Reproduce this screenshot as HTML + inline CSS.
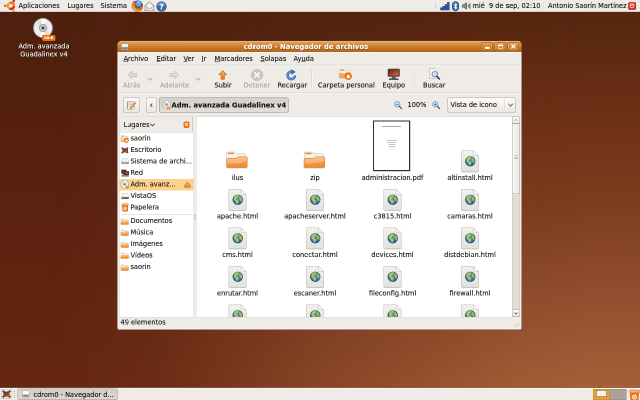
<!DOCTYPE html>
<html><head><meta charset="utf-8"><title>cdrom0 - Navegador de archivos</title>
<style>
html,body{margin:0;padding:0;width:640px;height:400px;overflow:hidden;background:#5a2410}
#s{position:absolute;left:0;top:0;width:1280px;height:800px;transform:scale(.5);transform-origin:0 0;will-change:transform;
 font-family:"DejaVu Sans","Liberation Sans",sans-serif;font-size:13.2px;color:#111;-webkit-text-stroke:.22px;overflow:hidden;
 background:linear-gradient(to bottom,#4e200d 3%,#5c2310 55%,#652712 97%);}
#bgr{left:0;top:0;width:1280px;height:800px;background:linear-gradient(to bottom,#56260f 3%,#6c3017 27%,#7d3c1e 50%,#925030 75%,#a66038 97%);
 -webkit-mask-image:linear-gradient(to right,transparent 8%,rgba(0,0,0,.1) 24%,rgba(0,0,0,.55) 50%,rgba(0,0,0,.92) 80%,#000 92%);mask-image:linear-gradient(to right,transparent 8%,rgba(0,0,0,.1) 24%,rgba(0,0,0,.55) 50%,rgba(0,0,0,.92) 80%,#000 92%)}
#s *{position:absolute;box-sizing:border-box;white-space:nowrap}
#s svg *{position:static}
.t{line-height:16px;height:16px}
.c{text-align:center}
.panel{left:0;width:1280px;height:24px;background:#efebe7}
#tp{top:0;border-bottom:1px solid #b9b3aa;height:24px}
#bp{top:776px;height:24px;border-top:1px solid #fff;box-shadow:0 -1px 0 #8a6a55}
#win{left:234px;top:81px;width:810px;height:579px;background:#efebe7;box-shadow:inset -1.500px -1.500px 0 #fbfaf9,inset 1.500px 0 0 #fbfaf9;border-radius:9px 9px 4px 4px;border:1px solid #5a3a22}
#tb{left:0;top:0;width:808px;height:22px;border-radius:8px 8px 0 0;
 background:linear-gradient(to bottom,#f3c690 0,#e3a055 2px,#d38a3c 8px,#c27426 15px,#b96b20 20px,#a95e18 22px)}
#tb .ttl{left:0;width:754px;top:3px;font-weight:bold;color:#fff;text-shadow:1px 1px 1px #6a3a0e;text-align:center;font-size:13.6px}
.wb{top:3px;width:23px;height:17px;border:1px solid #8d4f17;border-radius:3px;background:linear-gradient(to bottom,#dc9950,#c57a2c);box-shadow:inset 0 0 0 1px rgba(255,220,170,.35)}
.hl{background:#fff;height:1px}
.sep{background:#cfc9c0;height:1px}
.menu{top:110px}
#s .menu u{position:static;text-decoration:underline}
.tl{top:163px}
.dis{color:#a9a39b}
.vsep{width:1px;background:#cfc9c0;box-shadow:1px 0 0 #fff}
.btn{border:1px solid #aaa39a;border-radius:3px;background:linear-gradient(to bottom,#fbfaf9,#ece8e3)}
.side{left:240px;top:233px;width:148px;height:400px;background:#fff;border:1px solid #9d968c}
.si{left:281px}
#main{left:393px;top:234px;width:631px;height:400px;background:#fff;overflow:hidden;box-shadow:0 0 0 1px #dad5ce}
.lab{width:154px;text-align:center}
</style></head>
<body>
<svg width="0" height="0" style="position:absolute">
<defs>
<linearGradient id="gfold" x1="0" y1="0" x2="0" y2="1"><stop offset="0" stop-color="#fbb26e"/><stop offset=".5" stop-color="#f69846"/><stop offset="1" stop-color="#f08a2c"/></linearGradient>
<linearGradient id="gpaper" x1="0" y1="0" x2="0" y2="1"><stop offset="0" stop-color="#f1f1ee"/><stop offset="1" stop-color="#e2e2de"/></linearGradient>
<radialGradient id="gglobe" cx=".4" cy=".35" r=".7"><stop offset="0" stop-color="#5b96e0"/><stop offset="1" stop-color="#2253a8"/></radialGradient>
<radialGradient id="gcd" cx=".5" cy=".5" r=".5"><stop offset="0" stop-color="#fff"/><stop offset=".35" stop-color="#e3e6e6"/><stop offset=".8" stop-color="#f2f4f4"/><stop offset="1" stop-color="#cdd1d1"/></radialGradient>
<symbol id="folder" viewBox="0 0 44 36">
 <path d="M2 32.800 h40" stroke="#000" stroke-opacity=".22" stroke-width="2"/>
 <path d="M1.500 3 q0-2 2-2 h14 q1.500 0 2.300 1.500 l1 2 h17 q2 0 2 2 v20 h-38.300z" fill="#f6f2ec" stroke="#c3b9ab" stroke-width="1"/>
 <path d="M4 2.500 h12 v2.800 h-12z" fill="#f0822c"/>
 <path d="M1 15.500 q0-1.800 1.800-1.800 h16.500 q1.500 0 2.500-1.500 q1-1.500 2.500-1.500 h16.500 q1.800 0 1.800 1.800 v17.700 q0 1.800-1.800 1.800 h-38 q-1.800 0-1.800-1.800z" fill="url(#gfold)" stroke="#d97a22" stroke-width="1"/>
 <path d="M2 15.700 q0-1 1-1 h16.800 q1.500 0 2.500-1.500 q1-1.500 2.300-1.500 h16 q1 0 1 1 v6 q-18 7-39.600 5z" fill="#fff" opacity=".25"/>
</symbol>
<symbol id="html" viewBox="0 0 38 46">
 <path d="M3 44 h33" stroke="#000" stroke-opacity=".18" stroke-width="2"/>
 <path d="M1.500 3 q0-1.500 1.500-1.500 h23 l10.500 10.500 v30 q0 1.500-1.500 1.500 h-32 q-1.500 0-1.500-1.500z" fill="url(#gpaper)" stroke="#bdbcb6" stroke-width="1"/>
 <path d="M26 1.500 q1 3 0 8.500 q-.3 1.500 1.500 1.400 q5-.6 9 .6z" fill="#fafaf8" stroke="#bdbcb6" stroke-width="1" stroke-linejoin="round"/>
 <circle cx="19.500" cy="22.500" r="9.700" fill="url(#gglobe)" stroke="#1b3d82" stroke-width="1.200"/>
 <path d="M11.500 19.500 q1.500-4.500 6.500-6 q3.500 0 4 1.500 q-1 2.500-3 3 q-.5 2-2.500 3 q.5 2 3.500 2.500 q2.500 1 1.500 3.500 q-1 3-3.500 4 q-2.500-2-2.500-5 q-3.500-2-4-6.500z" fill="#aacb3a"/>
 <path d="M22.500 15 q4 1.500 5.500 5 q.8 3.500-.5 6.500 q-3-.5-3.500-3.500 q-2.500-1.500-2-4 q1.500-2 .5-4z" fill="#a0c434"/>
 <path d="M12 17 a9 9 0 0 1 15-1.500 q-7-3.500-15 1.500z" fill="#fff" opacity=".25"/>
</symbol>
<symbol id="cd" viewBox="0 0 32 32">
 <circle cx="16" cy="16" r="14.500" fill="url(#gcd)" stroke="#a4a8a8" stroke-width="1"/>
 <path d="M16 16 L4.500 7 A14.500 14.500 0 0 1 13 1.800z" fill="#bfe6cf" opacity=".75"/>
 <path d="M16 16 L13 1.800 A14.500 14.500 0 0 1 21 2.400z" fill="#fff" opacity=".8"/>
 <path d="M16 16 L27.500 25 A14.500 14.500 0 0 1 19 30.200z" fill="#f0cfe0" opacity=".7"/>
 <path d="M16 16 L19 30.200 A14.500 14.500 0 0 1 11 29.600z" fill="#fff" opacity=".7"/>
 <path d="M16 16 L1.600 14 A14.500 14.500 0 0 1 4.500 7z" fill="#e6e0f2" opacity=".6"/>
 <circle cx="16" cy="16" r="5.600" fill="#c4c7c7" stroke="#8f9494" stroke-width="1"/>
 <circle cx="16" cy="16" r="3" fill="#a0a4a4"/>
 <circle cx="16" cy="16" r="1.600" fill="#2e1c14"/>
</symbol>
<symbol id="cds" viewBox="0 0 32 32">
 <circle cx="16" cy="16" r="14.500" fill="url(#gcd)" stroke="#8a8e8e" stroke-width="1.800"/>
 <path d="M16 16 L4.500 7 A14.500 14.500 0 0 1 13 1.800z" fill="#bfe6cf" opacity=".75"/>
 <path d="M16 16 L13 1.800 A14.500 14.500 0 0 1 21 2.400z" fill="#fff" opacity=".8"/>
 <path d="M16 16 L27.500 25 A14.500 14.500 0 0 1 19 30.200z" fill="#f0cfe0" opacity=".7"/>
 <path d="M16 16 L19 30.200 A14.500 14.500 0 0 1 11 29.600z" fill="#fff" opacity=".7"/>
 <path d="M16 16 L1.600 14 A14.500 14.500 0 0 1 4.500 7z" fill="#e6e0f2" opacity=".6"/>
 <circle cx="16" cy="16" r="5.600" fill="#c4c7c7" stroke="#8f9494" stroke-width="1"/>
 <circle cx="16" cy="16" r="3" fill="#a0a4a4"/>
 <circle cx="16" cy="16" r="1.600" fill="#2e1c14"/>
</symbol>
</defs></svg>
<div id="s">
<div id="bgr"></div>
<div class="panel" id="tp"></div>
<svg style="left:0px;top:0px" width="34" height="24" viewBox="0 0 34 24"><path d="M18.33 16.74 A6.2 6.2 0 0 1 18.33 6.46" fill="none" stroke="#f2981c" stroke-width="4.600"/><path d="M19.08 6.03 A6.2 6.2 0 0 1 27.98 11.17" fill="none" stroke="#f06c12" stroke-width="4.600"/><path d="M27.98 12.03 A6.2 6.2 0 0 1 19.08 17.17" fill="none" stroke="#dc2420" stroke-width="4.600"/><circle cx="10.40" cy="11.60" r="2.500" fill="#ef5a14"/><circle cx="27.50" cy="1.73" r="2.500" fill="#dc2428"/><circle cx="27.50" cy="21.47" r="2.500" fill="#f0a020"/></svg>
<div class="t" style="left:37px;top:4px">Aplicaciones</div>
<div class="t" style="left:135px;top:4px">Lugares</div>
<div class="t" style="left:201px;top:4px">Sistema</div>
<svg style="left:262px;top:-1px" width="25" height="25" viewBox="0 0 25 25">
<circle cx="13.500" cy="11.500" r="9.800" fill="#2f62b4"/><circle cx="15" cy="8.500" r="5.500" fill="#6ea4e4"/><path d="M12 5 q3-2 6 0 q-1 3-4 2.500z" fill="#9cc4f0"/>
<path d="M6.500 2 Q1.500 6.500 1.500 13 Q2 20 8.500 23 Q16 25.500 21.500 20.500 Q24.500 16.500 23.500 9.500 Q22 13.500 19 14.500 Q17.500 17.500 13.500 17.500 Q9.500 17 8.500 13.500 Q8 10.500 10.500 8.500 Q7.500 8 6.500 2z" fill="#e8681a" stroke="#b84a0c" stroke-width=".6"/>
<path d="M3 12 Q3 19 9 22 Q15 24 20 20.500 Q14 22.500 9 19 Q5 16 4.500 10z" fill="#f9c23c"/>
<path d="M5 6 Q3 9 3.500 12 Q5 9 8 8.500 Q6 8 5 6z" fill="#f9a02c"/>
</svg>
<svg style="left:288px;top:2px" width="22" height="21" viewBox="0 0 22 21">
<path d="M2 9 L11 1.500 L20 9 V19 H2z" fill="#f4f2ee" stroke="#8a8680" stroke-width="1.200" stroke-linejoin="round"/>
<path d="M4.500 8 h13 v6 h-13z" fill="#fff" stroke="#c9c5be" stroke-width=".8"/>
<path d="M2 9.500 L11 15 L20 9.500 M2 19 L9 13.800 M20 19 L13 13.800" fill="none" stroke="#8a8680" stroke-width="1"/>
</svg>
<svg style="left:312px;top:2px" width="22" height="22" viewBox="0 0 22 22">
<circle cx="11" cy="11" r="9.600" fill="#3a6db5" stroke="#1f457f" stroke-width="1.200"/>
<path d="M3 8 A8.500 8.500 0 0 1 19 8 Q11 11 3 8z" fill="#7ea6da" opacity=".8"/>
<text x="11" y="16.500" font-family="DejaVu Sans,Liberation Sans,sans-serif" font-weight="bold" font-size="15" text-anchor="middle" fill="#fff">?</text>
</svg>
<div style="left:870px;top:7px;width:2px;height:2px;background:#b5afa6;box-shadow:0 4px 0 #b5afa6,0 8px 0 #b5afa6"></div>
<svg style="left:880px;top:3px" width="20" height="18" viewBox="0 0 20 18">
<g fill="#2f5ea8" stroke="#1c3a74" stroke-width="1"><rect x="1" y="12.500" width="3.600" height="4.500"/><rect x="5.600" y="9.500" width="3.600" height="7.500"/><rect x="10.200" y="6" width="3.600" height="11"/><rect x="14.800" y="1.500" width="3.800" height="15.500"/></g>
</svg>
<svg style="left:903px;top:2px" width="16" height="21" viewBox="0 0 16 21">
<rect x="1.500" y="1" width="13" height="19" rx="6.500" fill="#3465a4" stroke="#1f457f" stroke-width="1"/>
<path d="M4.500 6.500 L11 13.500 L8 16.500 V4.500 L11 7.500 L4.500 14.500" fill="none" stroke="#fff" stroke-width="1.400" stroke-linejoin="round"/>
</svg>
<svg style="left:924px;top:4px" width="18" height="16" viewBox="0 0 18 16">
<path d="M1 5.500 h3.500 l4.500-4 v13 l-4.500-4 h-3.500z" fill="#8f8d88" stroke="#4a4844" stroke-width="1.200" stroke-linejoin="round"/>
<path d="M17 1.500 L11.500 6 v4 L17 14.500z" fill="#77746e" opacity=".85"/>
</svg>
<div class="t" style="left:945px;top:4px">mié</div><div class="t" style="left:978px;top:4px">9 de sep, 02:10</div>
<div class="vsep" style="left:1086px;top:3px;height:19px"></div>
<div class="t" style="left:1096px;top:4px;letter-spacing:-.05px">Antonio Saorín Martínez</div>
<svg style="left:1255.500px;top:3.500px" width="16" height="16" viewBox="0 0 21 21">
<rect x="1" y="1" width="19" height="19" rx="3.500" fill="#dc2a1e" stroke="#8e1209" stroke-width="1"/>
<path d="M2.500 4 q0-1.500 1.500-1.500 h13 q1.500 0 1.500 1.500 v5 q-8 2.500-16 0z" fill="#f0675c" opacity=".7"/>
<path d="M7.500 6.500 A5 5 0 1 0 13.500 6.500" fill="none" stroke="#fff" stroke-width="1.800" stroke-linecap="round"/>
<line x1="10.500" y1="4" x2="10.500" y2="10" stroke="#fff" stroke-width="1.800" stroke-linecap="round"/>
</svg>
<svg style="left:65px;top:35px" width="42" height="42"><use href="#cd" width="42" height="42"/></svg>
<div style="left:84px;top:69.500px;width:27px;height:12px;border-radius:3px;background:#f07414;border:1px solid #d8640c;color:#fff;font-size:6.500px;line-height:10px;text-align:center;font-weight:bold">CD-R</div>
<div class="t c" style="left:13px;width:150px;top:84.500px;color:#fff;text-shadow:1px 1px 1px #000">Adm. avanzada</div>
<div class="t c" style="left:13px;width:150px;top:100.500px;color:#fff;text-shadow:1px 1px 1px #000">Guadalinex v4</div>
<div id="win">
<div id="tb"><div class="t ttl">cdrom0 - Navegador de archivos</div>
<svg style="left:6.500px;top:4px" width="15" height="15.500" viewBox="0 0 16 16">
<path d="M1 3 q0-2 2-2 h10 q2 0 2 2 v11 h-14z" fill="#f2f1ee" stroke="#8d8a84" stroke-width="1"/>
<rect x="1.500" y="8" width="13" height="6" fill="#a7aab0"/><rect x="3" y="9.500" width="10" height="3" fill="#7d8088"/>
</svg>
<div class="wb" style="left:727px"><div style="left:7px;top:8px;width:9px;height:4px;background:#fff;border-radius:1px;box-shadow:0 1px 0 #8a5218"></div></div>
<div class="wb" style="left:754px"><div style="left:6px;top:2.500px;width:10px;height:9.500px;border:1.500px solid #fff;border-top-width:3px;border-radius:2.500px"></div></div>
<div class="wb" style="left:780px"><svg style="left:5px;top:1px" width="11.500" height="11.500" viewBox="0 0 12 12"><path d="M2.500 2.500 L9.500 9.500 M9.500 2.500 L2.500 9.500" stroke="#fff" stroke-width="2.300" stroke-linecap="round"/></svg></div>
</div>
</div>
<div class="hl" style="left:239px;top:104px;width:800px"></div>
<div class="t menu" style="left:247px"><u>A</u>rchivo</div>
<div class="t menu" style="left:313px"><u>E</u>ditar</div>
<div class="t menu" style="left:367px"><u>V</u>er</div>
<div class="t menu" style="left:403px"><u>I</u>r</div>
<div class="t menu" style="left:429px"><u>M</u>arcadores</div>
<div class="t menu" style="left:521px"><u>S</u>olapas</div>
<div class="t menu" style="left:587px">Ay<u>u</u>da</div>
<div class="sep" style="left:239px;top:128px;width:800px"></div><div class="hl" style="left:239px;top:129px;width:800px"></div>
<svg style="left:253px;top:140px" width="22" height="20" viewBox="0 0 22 20"><path d="M2 10 L10.500 2 V6.500 H20 V13.500 H10.500 V18z" fill="#dcd8d2" stroke="#bdb8b0" stroke-width="1" stroke-linejoin="round"/></svg>
<div class="t tl dis" style="left:246px">Atrás</div>
<svg style="left:294px;top:153.500px" width="12" height="8.400" viewBox="0 0 10 7"><path d="M1 1 L5 5.500 L9 1" fill="none" stroke="#b0a89c" stroke-width="1.400"/></svg>
<svg style="left:338px;top:140px" width="22" height="20" viewBox="0 0 22 20"><path d="M20 10 L11.500 2 V6.500 H2 V13.500 H11.500 V18z" fill="#dcd8d2" stroke="#bdb8b0" stroke-width="1" stroke-linejoin="round"/></svg>
<div class="t tl dis" style="left:320px">Adelante</div>
<svg style="left:390px;top:153.500px" width="12" height="8.400" viewBox="0 0 10 7"><path d="M1 1 L5 5.500 L9 1" fill="none" stroke="#b0a89c" stroke-width="1.400"/></svg>
<svg style="left:436px;top:139px" width="19" height="21.500" viewBox="0 0 22 24"><defs><linearGradient id="gup" x1="0" y1="0" x2="0" y2="1"><stop offset="0" stop-color="#fbb76a"/><stop offset="1" stop-color="#e8720f"/></linearGradient></defs><path d="M11 2 L20 11.500 H15 V22 H7 V11.500 H2z" fill="url(#gup)" stroke="#b9570a" stroke-width="1.200" stroke-linejoin="round"/></svg>
<div class="t tl" style="left:429px">Subir</div>
<svg style="left:502px;top:138px" width="24" height="24" viewBox="0 0 24 24"><path d="M7.500 1 h9 l6.500 6.500 v9 l-6.500 6.500 h-9 l-6.500-6.500 v-9z" fill="#c9c4be" stroke="#b8b3ab" stroke-width="1" stroke-linejoin="round"/><path d="M7.800 7.800 L16.200 16.200 M16.200 7.800 L7.800 16.200" stroke="#fbfaf9" stroke-width="3.600" stroke-linecap="round"/></svg>
<div class="t tl dis" style="left:487px">Detener</div>
<svg style="left:572px;top:138px" width="22" height="23" viewBox="0 0 24 25"><path d="M19.500 14 A8 8 0 1 1 13 6.200" fill="none" stroke="#2c5ba8" stroke-width="5.500"/><path d="M19.500 14 A8 8 0 1 1 13 6.200" fill="none" stroke="#5f93d8" stroke-width="3"/><path d="M12 1 L20.500 6.500 L12 12z" fill="#3e74c2" stroke="#2c5ba8" stroke-width="1" stroke-linejoin="round"/></svg>
<div class="t tl" style="left:555px">Recargar</div>
<div class="vsep" style="left:623px;top:139px;height:36px"></div>
<svg style="left:678px;top:137px" width="27" height="24" viewBox="0 0 27 24"><path d="M1.500 3 q0-1.500 1.500-1.500 h7 l1.500 2.500 h9 q1.500 0 1.500 1.500 v12 h-20.500z" fill="#f6efe4" stroke="#d4bfa4" stroke-width="1"/><path d="M3 2.500 h6.500 v2 h-6.500z" fill="#f0822c"/><path d="M1 10.500 h11 l2-2 h8.500 v9 q0 1.500-1.500 1.500 h-18.500 q-1.500 0-1.500-1.500z" fill="#f8a55a" stroke="#e08a3a" stroke-width="1"/><circle cx="18.500" cy="15.500" r="6.800" fill="#f27414" stroke="#d85e08" stroke-width="1"/><path d="M14.300 16 L18.500 11.800 L22.700 16 H21.200 V19.300 H15.800 V16z" fill="#fff"/></svg>
<div class="t tl" style="left:636px">Carpeta personal</div>
<svg style="left:775px;top:137px" width="25" height="24" viewBox="0 0 25 24"><defs><linearGradient id="gscr" x1="0" y1="0" x2="1" y2="1"><stop offset="0" stop-color="#6e1a10"/><stop offset=".6" stop-color="#b24a2c"/><stop offset="1" stop-color="#d0784a"/></linearGradient></defs><rect x="1" y="1" width="23" height="15" rx="1.500" fill="#4a4946" stroke="#2a2927" stroke-width="1"/><rect x="3" y="3" width="19" height="11" fill="url(#gscr)"/><path d="M9.500 16.500 h6 l1.500 3 h-9z" fill="#55534e"/><path d="M4 20 h17 l1.500 2.500 h-20z" fill="#1e1e1d"/></svg>
<div class="t tl" style="left:765px">Equipo</div>
<div class="vsep" style="left:828px;top:139px;height:36px"></div>
<svg style="left:856px;top:135px" width="26" height="26" viewBox="0 0 26 26"><path d="M2.500 1.500 h11 l5 5 v15 h-16z" fill="#f5f4f1" stroke="#a9a69e" stroke-width="1"/><circle cx="13.500" cy="13.500" r="5.500" fill="#cfe0f4" stroke="#5d7fae" stroke-width="1.600"/><path d="M17.500 17.500 L23 23" stroke="#333" stroke-width="3" stroke-linecap="round"/></svg>
<div class="t tl" style="left:846px">Buscar</div>
<div class="sep" style="left:239px;top:185px;width:800px"></div><div class="hl" style="left:239px;top:186px;width:800px"></div>
<div class="btn" style="left:246px;top:195px;width:33px;height:30px"></div>
<svg style="left:253px;top:200px" width="20" height="20" viewBox="0 0 20 20"><rect x="1.500" y="2.500" width="14" height="16" rx="1" fill="#e9e9e5" stroke="#9a9993" stroke-width="1"/><path d="M4 6 h9 M4 9 h9 M4 12 h6" stroke="#b5b4ae" stroke-width="1.200"/><path d="M8 14.500 L16.500 4.500 L19 6.500 L10.500 16.500 L7.500 17.500z" fill="#f5a02a" stroke="#a8650c" stroke-width=".8"/></svg>
<div class="btn" style="left:292px;top:195px;width:21px;height:30px"></div>
<svg style="left:299px;top:206px" width="7" height="9" viewBox="0 0 7 9"><path d="M5.500 1 L2 4.500 L5.500 8" fill="none" stroke="#333" stroke-width="1.700"/></svg>
<div class="btn" style="left:318px;top:195px;width:259px;height:30px;background:linear-gradient(to bottom,#d6d1ca,#e2ded8);border-color:#8f8980"></div>
<svg style="left:325px;top:201px" width="17" height="17"><use href="#cds" width="17" height="17"/></svg>
<div style="left:333px;top:213.500px;width:8px;height:5px;border-radius:2px;background:#f4924a"></div>
<div class="t" style="left:343px;top:202px;font-weight:bold;font-size:13.500px">Adm. avanzada Guadalinex v4</div>
<svg style="left:787px;top:201px" width="18" height="18" viewBox="0 0 20 20"><circle cx="8.500" cy="8.500" r="6" fill="#d3e3f6" stroke="#6a8fc0" stroke-width="1.600"/><path d="M5.500 8.500 h6" stroke="#3465a4" stroke-width="1.600"/><path d="M13 13 L18 18" stroke="#55534e" stroke-width="2.600" stroke-linecap="round"/></svg>
<div class="t" style="left:815px;top:202px">100%</div>
<svg style="left:863px;top:201px" width="18" height="18" viewBox="0 0 20 20"><circle cx="8.500" cy="8.500" r="6" fill="#d3e3f6" stroke="#6a8fc0" stroke-width="1.600"/><path d="M5.500 8.500 h6" stroke="#3465a4" stroke-width="1.600"/><path d="M8.500 5.500 v6" stroke="#3465a4" stroke-width="1.600"/><path d="M13 13 L18 18" stroke="#55534e" stroke-width="2.600" stroke-linecap="round"/></svg>
<div class="btn" style="left:895px;top:195px;width:137px;height:30px"></div>
<div class="t" style="left:901px;top:202px">Vista de icono</div>
<div class="vsep" style="left:1009px;top:199px;height:22px"></div>
<svg style="left:1014.500px;top:206px" width="12" height="9" viewBox="0 0 12 9"><path d="M1.500 1.500 L6 6.500 L10.500 1.500" fill="none" stroke="#333" stroke-width="1.500"/></svg>
<div style="left:239px;top:233px;width:147px;height:32px;background:#efebe7;border:1px solid #b3ada3;border-top-color:#d9d4cc;border-left-color:#d9d4cc;border-radius:2px"></div>
<div class="t" style="left:247px;top:241.500px">Lugares</div>
<svg style="left:299px;top:246px" width="12" height="8" viewBox="0 0 12 8"><path d="M1.500 1.500 L6 6 L10.500 1.500" fill="none" stroke="#2a2a2a" stroke-width="1.500"/></svg>
<svg style="left:367px;top:242.500px" width="12" height="12" viewBox="0 0 13 13"><rect x=".5" y=".5" width="12" height="12" rx="2.500" fill="#f0701c" stroke="#e8681a" stroke-width="1"/><path d="M3.800 3.800 L9.200 9.200 M9.200 3.800 L3.800 9.200" stroke="#fff" stroke-width="2"/></svg>
<div style="left:239px;top:265px;width:147.500px;height:369px;background:#fff;box-shadow:0 0 0 1px #dad5ce"></div>
<div style="left:239px;top:358px;width:147.500px;height:23px;background:#fcd28c"></div>
<svg style="left:241px;top:269.5px" width="17" height="16" viewBox="0 0 18 17"><path d="M1 2.500 q0-1.500 1.500-1.500 h5 l1.500 2 h6 q1.500 0 1.500 1.500 v8 h-15.500z" fill="#f4eadc" stroke="#d9b896" stroke-width=".8"/><path d="M2.500 2 h4.500 v1.500 h-4.500z" fill="#f0822c"/><path d="M.8 7 h9 l1.500-1.500 h5.500 v7.500 q0 1-1 1 h-14 q-1 0-1-1z" fill="#f9d2a6" stroke="#eea05a" stroke-width=".9"/><path d="M1 12.500 h15 v1.500 h-15z" fill="#f08a3c"/><circle cx="12.500" cy="11.500" r="4.600" fill="#f27414" stroke="#d85e08" stroke-width=".8"/><path d="M9.800 11.800 L12.500 9 L15.200 11.800 H14.200 V14 H10.800 V11.800z" fill="#fff"/></svg>
<div class="t" style="left:261px;top:269.0px">saorin</div>
<svg style="left:243px;top:293.75px" width="13.5" height="13.5" viewBox="0 0 16 16"><defs><linearGradient id="gdk292" x1="0" y1="0" x2="1" y2="1"><stop offset="0" stop-color="#7a2414"/><stop offset="1" stop-color="#b8563a"/></linearGradient></defs><rect x="2.500" y="3.500" width="11" height="9" fill="url(#gdk292)" stroke="#5a2a1c" stroke-width="1"/><path d="M1 4.500 V2 H3.500 M12.500 2 H15 V4.500 M1 11.500 V14 H3.500 M12.500 14 H15 V11.500" fill="none" stroke="#1e1e1e" stroke-width="1.800"/></svg>
<div class="t" style="left:261px;top:292.0px">Escritorio</div>
<svg style="left:241.500px;top:315px" width="16.500" height="14.500" viewBox="0 0 18 16"><path d="M3.500 3 h11 l2.500 6.500 v4.500 h-16 v-4.500z" fill="#f7f7f5" stroke="#aeada8" stroke-width="1" stroke-linejoin="round"/><rect x="1.500" y="10" width="15" height="4" fill="#c4c3bd" stroke="#8f8e89" stroke-width=".8"/><rect x="3" y="11.500" width="3" height="1.200" fill="#5fae3a"/><rect x="8" y="11.500" width="7" height="1.200" fill="#77766f"/></svg>
<div class="t" style="left:261px;top:315.0px">Sistema de archi...</div>
<svg style="left:241.500px;top:339px" width="16.500" height="14.500" viewBox="0 0 18 16"><rect x="1.500" y="1.200" width="9" height="7" fill="#8a3220" stroke="#2c2b29" stroke-width="1.800"/><rect x="3" y="8.500" width="5" height="2.500" fill="#3a3936"/><rect x="7.500" y="4.500" width="9" height="7" fill="#a8472c" stroke="#2c2b29" stroke-width="1.800"/><rect x="10" y="11.500" width="4" height="1.500" fill="#2c2b29"/><rect x="1.500" y="12.800" width="15" height="2.400" fill="#9a9890" stroke="#55534e" stroke-width=".8"/><rect x="3" y="13.500" width="3" height="1" fill="#6fae4a"/></svg>
<div class="t" style="left:261px;top:338.0px">Red</div>
<svg style="left:241px;top:360px" width="17" height="17"><use href="#cds" width="17" height="17"/></svg><div style="left:251px;top:372px;width:7px;height:4.500px;border-radius:1.500px;background:#f08a3c"></div>
<div class="t" style="left:261px;top:361.0px">Adm. avanz...</div>
<svg style="left:241.500px;top:385px" width="16.500" height="14.500" viewBox="0 0 18 16"><path d="M3.500 3 h11 l2.500 6.500 v4.500 h-16 v-4.500z" fill="#fafaf8" stroke="#aeada8" stroke-width="1" stroke-linejoin="round"/><rect x="1.500" y="10" width="15" height="4" fill="#9d9c96" stroke="#6f6e69" stroke-width=".8"/><rect x="3" y="11.300" width="12" height="1.800" fill="#3c3b38"/></svg>
<div class="t" style="left:261px;top:384.0px">VistaOS</div>
<svg style="left:242px;top:406px" width="16" height="17" viewBox="0 0 16 17"><path d="M2.500 5 h11 l-.8 10.500 q-.1 1-1 1 h-7.400 q-.9 0-1-1z" fill="#f07a1c" stroke="#d4620c" stroke-width="1" stroke-linejoin="round"/><rect x="1.500" y="1.500" width="13" height="3.500" rx="1" fill="#f9b87a" stroke="#e07a24" stroke-width="1"/><circle cx="8" cy="10.800" r="2.500" fill="none" stroke="#fff" stroke-width="1.300"/><rect x="7.200" y="9.800" width="1.600" height="2" fill="#fff"/></svg>
<div class="t" style="left:261px;top:407.0px">Papelera</div>
<div class="sep" style="left:243px;top:428px;width:142px"></div>
<svg style="left:241px;top:437px" width="17" height="13.500"><use href="#folder" width="17" height="13.500"/></svg>
<div class="t" style="left:261px;top:434.0px">Documentos</div>
<svg style="left:241px;top:459px" width="17" height="13.500"><use href="#folder" width="17" height="13.500"/></svg>
<div class="t" style="left:261px;top:457.0px">Música</div>
<svg style="left:241px;top:483px" width="17" height="13.500"><use href="#folder" width="17" height="13.500"/></svg>
<div class="t" style="left:261px;top:480.0px">Imágenes</div>
<svg style="left:241px;top:505px" width="17" height="13.500"><use href="#folder" width="17" height="13.500"/></svg>
<div class="t" style="left:261px;top:503.0px">Vídeos</div>
<svg style="left:241px;top:529px" width="17" height="13.500"><use href="#folder" width="17" height="13.500"/></svg>
<div class="t" style="left:261px;top:526.0px">saorin</div>
<svg style="left:368px;top:363px" width="14" height="13" viewBox="0 0 14 13"><path d="M7 1 L13 7.500 H1z" fill="#f4a04a" stroke="#c9650c" stroke-width="1" stroke-linejoin="round"/><rect x="1" y="9.500" width="12" height="2.500" fill="#f4a04a" stroke="#c9650c" stroke-width=".8"/></svg>
<div id="main">
<svg style="left:59px;top:69px" width="44" height="36"><use href="#folder" width="44" height="36"/></svg>
<svg style="left:214px;top:69px" width="44" height="36"><use href="#folder" width="44" height="36"/></svg>
<div style="left:353px;top:7px;width:74px;height:101px;background:#fff;border:2px solid #2e2e2e;box-shadow:1px 1px 0 #aaa"></div>
<div style="left:371px;top:18.5px;width:38px;height:1.500px;background:#555"></div>
<div style="left:380px;top:46.5px;width:21px;height:1.200px;background:#8c8c8c"></div>
<div style="left:381px;top:49.5px;width:19px;height:1.200px;background:#8c8c8c"></div>
<div style="left:384px;top:54.5px;width:14px;height:1.200px;background:#8c8c8c"></div>
<div style="left:385px;top:57.5px;width:12px;height:1.200px;background:#8c8c8c"></div>
<svg style="left:528px;top:65.5px" width="38" height="46"><use href="#html" width="38" height="46"/></svg>
<div class="t lab" style="left:5px;top:114px">ilus</div>
<div class="t lab" style="left:160px;top:114px">zip</div>
<div class="t lab" style="left:315px;top:114px">administracion.pdf</div>
<div class="t lab" style="left:470px;top:114px">altinstall.html</div>
<div class="t lab" style="left:5px;top:191px">apache.html</div>
<svg style="left:63px;top:142.5px" width="38" height="46"><use href="#html" width="38" height="46"/></svg>
<div class="t lab" style="left:160px;top:191px">apacheserver.html</div>
<svg style="left:218px;top:142.5px" width="38" height="46"><use href="#html" width="38" height="46"/></svg>
<div class="t lab" style="left:315px;top:191px">c3815.html</div>
<svg style="left:373px;top:142.5px" width="38" height="46"><use href="#html" width="38" height="46"/></svg>
<div class="t lab" style="left:470px;top:191px">camaras.html</div>
<svg style="left:528px;top:142.5px" width="38" height="46"><use href="#html" width="38" height="46"/></svg>
<div class="t lab" style="left:5px;top:268px">cms.html</div>
<svg style="left:63px;top:219.5px" width="38" height="46"><use href="#html" width="38" height="46"/></svg>
<div class="t lab" style="left:160px;top:268px">conectar.html</div>
<svg style="left:218px;top:219.5px" width="38" height="46"><use href="#html" width="38" height="46"/></svg>
<div class="t lab" style="left:315px;top:268px">devices.html</div>
<svg style="left:373px;top:219.5px" width="38" height="46"><use href="#html" width="38" height="46"/></svg>
<div class="t lab" style="left:470px;top:268px">distdebian.html</div>
<svg style="left:528px;top:219.5px" width="38" height="46"><use href="#html" width="38" height="46"/></svg>
<div class="t lab" style="left:5px;top:345px">enrutar.html</div>
<svg style="left:63px;top:296.5px" width="38" height="46"><use href="#html" width="38" height="46"/></svg>
<div class="t lab" style="left:160px;top:345px">escaner.html</div>
<svg style="left:218px;top:296.5px" width="38" height="46"><use href="#html" width="38" height="46"/></svg>
<div class="t lab" style="left:315px;top:345px">fileconfig.html</div>
<svg style="left:373px;top:296.5px" width="38" height="46"><use href="#html" width="38" height="46"/></svg>
<div class="t lab" style="left:470px;top:345px">firewall.html</div>
<svg style="left:528px;top:296.5px" width="38" height="46"><use href="#html" width="38" height="46"/></svg>
<svg style="left:63px;top:373.5px" width="38" height="46"><use href="#html" width="38" height="46"/></svg>
<svg style="left:218px;top:373.5px" width="38" height="46"><use href="#html" width="38" height="46"/></svg>
<svg style="left:373px;top:373.5px" width="38" height="46"><use href="#html" width="38" height="46"/></svg>
<svg style="left:528px;top:373.5px" width="38" height="46"><use href="#html" width="38" height="46"/></svg>
</div>
<div style="left:1024px;top:233px;width:16px;height:401px;background:#e2ded7;border:1px solid #c4beb5"></div>
<div class="btn" style="left:1024px;top:233px;width:16px;height:14px;border-radius:2px;border-color:#aaa39a"></div>
<div class="btn" style="left:1024px;top:619px;width:16px;height:15px;border-radius:2px;border-color:#aaa39a"></div>
<div class="btn" style="left:1024px;top:247px;width:16px;height:141px;border-radius:2px;border-color:#aaa39a;background:linear-gradient(to right,#fbfaf9,#ebe7e2)"></div>
<svg style="left:1028px;top:237px" width="8" height="6" viewBox="0 0 8 6"><path d="M1 5 L4 1.500 L7 5" fill="none" stroke="#aaa49c" stroke-width="1.200"/></svg>
<svg style="left:1028px;top:624px" width="8" height="6" viewBox="0 0 8 6"><path d="M1 1 L4 4.500 L7 1" fill="none" stroke="#444" stroke-width="1.200"/></svg>
<div style="left:1029px;top:311px;width:6px;height:1px;background:#8f8980;box-shadow:0 3px 0 #8f8980,0 6px 0 #8f8980"></div>
<div style="left:389px;top:430px;width:2px;height:1.500px;background:#a39c92;box-shadow:0 3px 0 #a39c92,0 6px 0 #a39c92"></div>
<svg style="left:1024px;top:640px" width="15" height="15" viewBox="0 0 15 15"><path d="M14 3 L3 14 M14 7 L7 14 M14 11 L11 14" stroke="#d5d0c8" stroke-width="1.200"/></svg>
<div class="t" style="left:241px;top:637px">49 elementos</div>
<div class="panel" id="bp"></div>
<div class="btn" style="left:2px;top:778px;width:21px;height:20px;border-radius:3px;border-color:#b5afa6"></div>
<svg style="left:4.5px;top:779.5px" width="16" height="16" viewBox="0 0 16 16"><defs><linearGradient id="gdk779" x1="0" y1="0" x2="1" y2="1"><stop offset="0" stop-color="#7a2414"/><stop offset="1" stop-color="#b8563a"/></linearGradient></defs><rect x="2.500" y="3.500" width="11" height="9" fill="url(#gdk779)" stroke="#5a2a1c" stroke-width="1"/><path d="M1 4.500 V2 H3.500 M12.500 2 H15 V4.500 M1 11.500 V14 H3.500 M12.500 14 H15 V11.500" fill="none" stroke="#1e1e1e" stroke-width="1.800"/></svg>
<div style="left:28px;top:782px;width:2px;height:2px;background:#b5afa6;box-shadow:0 4px 0 #b5afa6,0 8px 0 #b5afa6,0 12px 0 #b5afa6"></div>
<div class="btn" style="left:35px;top:777px;width:200px;height:23px;border-radius:3px;background:linear-gradient(to bottom,#d3cec7,#dcd8d2);border-color:#9d968c"></div>
<svg style="left:43px;top:780px" width="17" height="16" viewBox="0 0 16 16"><path d="M1 3.500 q0-2.500 2.500-2.500 h9 q2.500 0 2.500 2.500 v11 h-14z" fill="#fbfbfa" stroke="#a5a39d" stroke-width="1"/><rect x="1.500" y="8.500" width="13" height="6" fill="#b9bbc0"/><rect x="3" y="10" width="10" height="3" fill="#85888f"/></svg>
<div class="t" style="left:67px;top:781.500px">cdrom0 - Navegador d...</div>
<div style="left:1186px;top:778px;width:67px;height:22px;background:#aca296;border:1px solid #8e857a"></div>
<div style="left:1186px;top:778px;width:33px;height:22px;background:#e9a233;border:1px solid #c8841c"></div>
<div style="left:1192px;top:780px;width:22px;height:14px;background:#fdf3dc;border:1.500px solid #4e4a44"></div>
<svg style="left:1257px;top:778px" width="24.0" height="25.5" viewBox="0 0 16 17"><path d="M2.500 5 h11 l-.8 10.500 q-.1 1-1 1 h-7.400 q-.9 0-1-1z" fill="#f07a1c" stroke="#d4620c" stroke-width="1" stroke-linejoin="round"/><rect x="1.500" y="1.500" width="13" height="3.500" rx="1" fill="#f9b87a" stroke="#e07a24" stroke-width="1"/><circle cx="8" cy="10.800" r="2.500" fill="none" stroke="#fff" stroke-width="1.300"/><rect x="7.200" y="9.800" width="1.600" height="2" fill="#fff"/></svg>
</div>
</body></html>
